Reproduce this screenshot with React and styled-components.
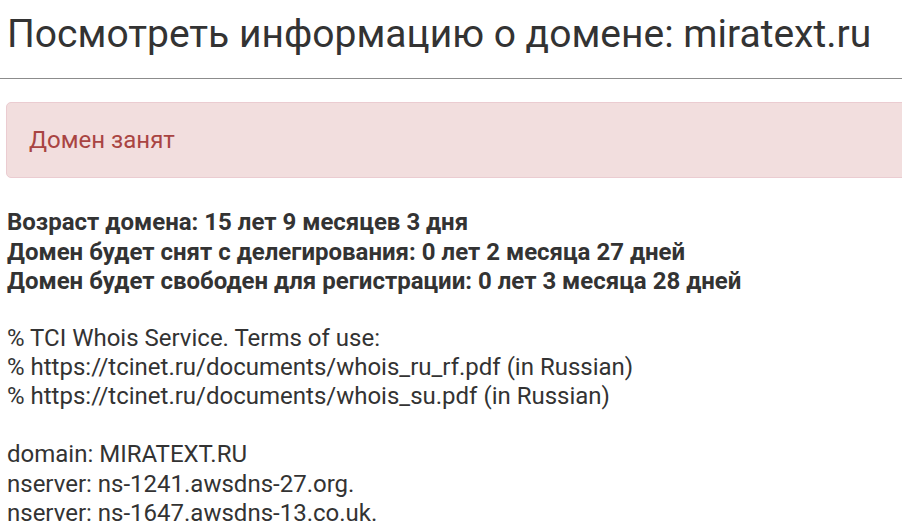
import React from 'react';
import styled, {createGlobalStyle} from "styled-components";

const GlobalStyle = createGlobalStyle`
  body {
    margin : 0;
    background : #fff;
    font-family : Roboto, "Noto Sans", sans-serif;
    color : #333;
    overflow : hidden;
  }
`;

const Page = styled.div`
  width : 940px;
  padding : 0 0 0 6px;
`;

const Title = styled.h1`
  margin : 0;
  padding : 12px 0 0 1px;
  height : 66px;
  font-size : 39px;
  font-weight : 400;
  line-height : 44px;
  color : #333;
`;

const Line = styled.hr`
  margin : 0 0 23px -6px;
  border : 0;
  border-top : 1px solid #8c8c8c;
`;

const Alert = styled.div`
  height : 76px;
  box-sizing : border-box;
  display : flex;
  align-items : center;
  padding : 0 22px;
  background : #f2dede;
  border : 1px solid #ebccd1;
  border-radius : 5px;
  color : #a94442;
  font-size : 24px;
`;

const Stats = styled.div`
  margin-top : 30px;
  padding-left : 1px;
  font-size : 24px;
  font-weight : 700;
  line-height : 29.5px;
`;

const Whois = styled.pre`
  margin : 27px 0 0;
  padding-left : 1px;
  font-family : Roboto, "Noto Sans", sans-serif;
  font-size : 24px;
  line-height : 29.2px;
  color : #333;
`;

const stats = [
    "Возраст домена: 15 лет 9 месяцев 3 дня",
    "Домен будет снят с делегирования: 0 лет 2 месяца 27 дней",
    "Домен будет свободен для регистрации: 0 лет 3 месяца 28 дней",
];

const whois = `% TCI Whois Service. Terms of use:
% https://tcinet.ru/documents/whois_ru_rf.pdf (in Russian)
% https://tcinet.ru/documents/whois_su.pdf (in Russian)

domain: MIRATEXT.RU
nserver: ns-1241.awsdns-27.org.
nserver: ns-1647.awsdns-13.co.uk.`;

const App = () => {
    return (
        <>
            <GlobalStyle/>
            <Page>
                <Title>Посмотреть информацию о домене: miratext.ru</Title>
                <Line/>
                <Alert>Домен занят</Alert>
                <Stats>
                    {stats.map((s) => <div key={s}>{s}</div>)}
                </Stats>
                <Whois>{whois}</Whois>
            </Page>
        </>
    );
};

export default App;
